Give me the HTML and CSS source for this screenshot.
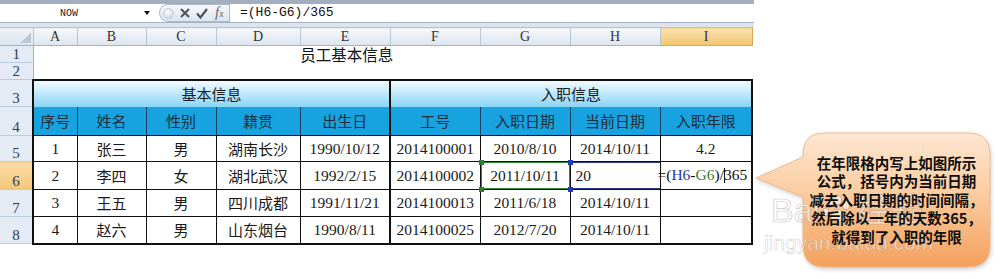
FILE: index.html
```html
<!DOCTYPE html>
<html lang="zh-CN">
<head>
    <meta charset="UTF-8">
    <title>员工基本信息</title>
    <link rel="stylesheet" href="styles.css">
</head>
<body>
    <div class="window">
        <div class="topbar"></div>
        <div class="formula-bar">
            <div class="name-box">
                <span class="name">NOW</span>
                <span class="drop"></span>
            </div>
            <div class="fx-buttons">
                <span class="knob"></span>
                <svg class="btn cancel" width="10" height="10" viewBox="0 0 10 10">
                    <path d="M1 1 L9 9 M9 1 L1 9" stroke="#4d535e" stroke-width="2" fill="none"/>
                </svg>
                <svg class="btn enter" width="12" height="11" viewBox="0 0 12 11">
                    <path d="M1 5.5 L4.5 9.5 L11 1" stroke="#4d535e" stroke-width="2.2" fill="none"/>
                </svg>
                <span class="fx"><i>f</i><small>x</small></span>
            </div>
            <div class="formula-input">=(H6-G6)/365</div>
        </div>
        <div class="bar-gap"></div>

        <table class="sheet">
            <colgroup>
                <col style="width:33px">
                <col style="width:44px">
                <col style="width:69px">
                <col style="width:70px">
                <col style="width:84px">
                <col style="width:90px">
                <col style="width:90px">
                <col style="width:90px">
                <col style="width:90px">
                <col style="width:92px">
            </colgroup>
            <tr class="heads">
                <td class="corner"></td>
                <td>A</td><td>B</td><td>C</td><td>D</td><td>E</td>
                <td>F</td><td>G</td><td>H</td><td class="active">I</td>
            </tr>
            <tr class="r-short">
                <td class="rh">1</td>
                <td colspan="8" class="title">员工基本信息</td>
                <td></td>
            </tr>
            <tr class="r-short">
                <td class="rh">2</td>
                <td colspan="9"></td>
            </tr>
            <tr class="r3">
                <td class="rh">3</td>
                <td colspan="5" class="grp">基本信息</td>
                <td colspan="4" class="grp">入职信息</td>
            </tr>
            <tr class="r4">
                <td class="rh">4</td>
                <td class="hd first">序号</td>
                <td class="hd">姓名</td>
                <td class="hd">性别</td>
                <td class="hd">籍贯</td>
                <td class="hd split">出生日</td>
                <td class="hd">工号</td>
                <td class="hd">入职日期</td>
                <td class="hd">当前日期</td>
                <td class="hd last">入职年限</td>
            </tr>
            <tr class="r5">
                <td class="rh">5</td>
                <td class="c num first">1</td>
                <td class="c">张三</td>
                <td class="c">男</td>
                <td class="c">湖南长沙</td>
                <td class="c num split">1990/10/12</td>
                <td class="c num">2014100001</td>
                <td class="c num">2010/8/10</td>
                <td class="c num">2014/10/11</td>
                <td class="c num last">4.2</td>
            </tr>
            <tr class="r6">
                <td class="rh active">6</td>
                <td class="c num first">2</td>
                <td class="c">李四</td>
                <td class="c">女</td>
                <td class="c">湖北武汉</td>
                <td class="c num split">1992/2/15</td>
                <td class="c num">2014100002</td>
                <td class="c num ref-g">2011/10/11
                    <span class="mk g tl"></span><span class="mk g bl"></span>
                    <span class="mk b tr"></span><span class="mk b br"></span>
                </td>
                <td class="c num ref-h">20</td>
                <td class="c num last editing"><span class="edit">=(<span class="h-ref">H6</span>-<span class="g-ref">G6</span>)/<span class="caret"></span>365</span></td>
            </tr>
            <tr class="r7">
                <td class="rh">7</td>
                <td class="c num first">3</td>
                <td class="c">王五</td>
                <td class="c">男</td>
                <td class="c">四川成都</td>
                <td class="c num split">1991/11/21</td>
                <td class="c num">2014100013</td>
                <td class="c num">2011/6/18</td>
                <td class="c num">2014/10/11</td>
                <td class="c num last"></td>
            </tr>
            <tr class="r8">
                <td class="rh">8</td>
                <td class="c num first">4</td>
                <td class="c">赵六</td>
                <td class="c">男</td>
                <td class="c">山东烟台</td>
                <td class="c num split">1990/8/11</td>
                <td class="c num">2014100025</td>
                <td class="c num">2012/7/20</td>
                <td class="c num">2014/10/11</td>
                <td class="c num last"></td>
            </tr>
        </table>
    </div>

    <!-- note bubble pointing at I6 -->
    <div class="callout">
        <svg class="bubble" width="240" height="142" viewBox="0 0 240 142">
            <defs>
                <linearGradient id="peach" x1="0" y1="0" x2="0" y2="1">
                    <stop offset="0" stop-color="#fde7d3"/>
                    <stop offset="0.45" stop-color="#fbcc9f"/>
                    <stop offset="1" stop-color="#f4a05c"/>
                </linearGradient>
            </defs>
            <path d="M1 48 L48 27 L48 25 Q48 3 70 3 L213 3 Q235 3 235 25 L235 115 Q235 137 213 137 L70 137 Q48 137 48 115 L48 67 Z"
                  fill="url(#peach)" stroke="#eeb98a" stroke-width="1"/>
        </svg>
        <div class="wm-big">
            Bai<svg class="paw" width="30" height="30" viewBox="0 0 30 30">
                <g fill="rgba(255,255,255,0.55)" stroke="rgba(120,120,120,0.45)" stroke-width="1">
                    <ellipse cx="8" cy="8" rx="3.5" ry="4.5"/>
                    <ellipse cx="16" cy="5" rx="3.5" ry="4.5"/>
                    <ellipse cx="24" cy="10" rx="3.5" ry="4.5"/>
                    <ellipse cx="4" cy="17" rx="3" ry="4"/>
                    <path d="M9 25 Q9 15 15 14 Q22 15 22 25 Q15 29 9 25 Z"/>
                </g>
            </svg>经验
        </div>
        <div class="wm-url">jingyan.baidu.com</div>
        <div class="note">
            在年限格内写上如图所示<br>
            公式，括号内为当前日期<br>
            减去入职日期的时间间隔，<br>
            然后除以一年的天数365，<br>
            就得到了入职的年限
        </div>
    </div>
</body>
</html>
```

FILE: styles.css
```css
body {
    margin: 0;
    background: #fff;
    font-family: "Noto Sans CJK SC", sans-serif;
    overflow: hidden;
}
.window {
    width: 754px;
}
.topbar {
    height: 4px;
    background: #a3afbf;
}

/* formula bar */
.formula-bar {
    display: flex;
    height: 18px;
    border-bottom: 1px solid #a3b2c4;
    background: #fff;
}
.name-box {
    width: 159px;
    display: flex;
    align-items: center;
}
.name-box .name {
    margin-left: 60px;
    font-family: "Liberation Mono", monospace;
    font-size: 10px;
    color: #222;
}
.name-box .drop {
    margin-left: 66px;
    width: 0;
    height: 0;
    border-left: 3px solid transparent;
    border-right: 3px solid transparent;
    border-top: 4px solid #111;
}
.fx-buttons {
    width: 70px;
    display: flex;
    align-items: center;
    border: 1px solid #aab8c9;
    border-right: none;
    border-radius: 9px 0 0 9px;
    background: linear-gradient(#f6f8fb, #dce4ee);
    box-sizing: border-box;
    height: 18px;
}
.knob {
    width: 9px;
    height: 9px;
    margin-left: 3px;
    border-radius: 50%;
    background: radial-gradient(circle at 40% 35%, #fff, #c4ccd6);
    border: 1px solid #c3ccd7;
}
.cancel {
    margin-left: 6px;
}
.enter {
    margin-left: 6px;
}
.fx {
    margin-left: 7px;
    font-family: "Liberation Serif", serif;
    font-size: 15px;
    line-height: 16px;
    color: #5d6571;
}
.fx small {
    font-size: 10px;
    font-style: italic;
}
.formula-input {
    flex: 1;
    border-left: 1px solid #aab8c9;
    padding-left: 10px;
    font-family: "Liberation Mono", monospace;
    font-size: 13px;
    line-height: 18px;
    color: #111;
}
.bar-gap {
    height: 4px;
    background: #dde4ed;
}

/* sheet grid */
.sheet {
    border-collapse: collapse;
    table-layout: fixed;
    width: 752px;
}
.sheet td {
    padding: 0;
    text-align: center;
    vertical-align: middle;
    white-space: nowrap;
    font-size: 15px;
    line-height: 14px;
    color: #1a1a1a;
}
.heads td {
    height: 17px;
    background: linear-gradient(#f6f8fb, #dde5ee);
    border-top: 1px solid #b4c2d2;
    border-right: 1px solid #b5c6d8;
    border-bottom: 1px solid #9fb3c9;
    font-family: "Liberation Serif", serif;
    font-size: 14px;
    color: #333;
}
.heads td.active {
    background: linear-gradient(#fbe3b4, #f2c46b);
    border-right-color: #d9a850;
}
.heads td.corner {
    background:
        linear-gradient(135deg, transparent 50%, #bcc8d6 50%) right 2px bottom 2px / 11px 11px no-repeat,
        linear-gradient(#eef2f7, #dce4ee);
}
.sheet td.rh {
    background: #e4ebf5;
    border-right: 1px solid #9fb3c9;
    border-bottom: 1px solid #bccbdc;
    font-family: "Liberation Serif", serif;
    font-size: 15px;
    color: #2a3c58;
    vertical-align: bottom;
    padding-bottom: 1px;
}
.sheet td.rh.active {
    background: linear-gradient(#fbdca6, #f3c778);
}
.r-short td {
    height: 15px;
}
.sheet td.title {
    font-size: 15.5px;
    color: #111;
}
.r3 td { height: 25px; }
.r4 td { height: 27px; }
.r5 td { height: 24px; }
.r6 td { height: 26px; }
.r7 td { height: 25px; }
.r8 td { height: 25px; }

.sheet td.grp {
    background: linear-gradient(#f2fbfe, #8ad5f6);
    border-top: 2px solid #111;
    border-left: 2px solid #111;
    border-right: 2px solid #111;
    color: #1c1c1c;
}
.sheet td.hd {
    background: #17a3e0;
    border-left: 1px solid #173f62;
    border-right: 1px solid #173f62;
    border-bottom: 1px solid #111;
    color: #1f2d3c;
}
.sheet td.c {
    border: 1px solid #111;
    background: #fff;
}
.sheet td.num {
    font-family: "Liberation Serif", serif;
    font-size: 15.5px;
}
.sheet td.first { border-left: 2px solid #111; }
.sheet td.last { border-right: 2px solid #111; }
.sheet td.split { border-right: 2px solid #111; }
.r8 td.c { border-bottom: 2px solid #111; }

/* formula reference highlights */
.sheet td.ref-g {
    position: relative;
    box-shadow: inset 1px 1px 0 #2f8a36, inset -1px -1px 0 #2f8a36;
}
.sheet td.ref-h {
    text-align: left;
    padding-left: 5px;
    box-shadow: inset 0 1px 0 #2b3a8f, inset 0 -1px 0 #2b3a8f;
}
.mk {
    position: absolute;
    width: 5px;
    height: 5px;
}
.mk.g { background: #2c7f2f; }
.mk.b { background: #1f3bbd; }
.mk.tl { left: -2px; top: -2px; }
.mk.bl { left: -2px; bottom: -3px; }
.mk.tr { right: -3px; top: -2px; }
.mk.br { right: -3px; bottom: -3px; }

.sheet td.editing {
    text-align: left;
    border-left-color: transparent;
}
.edit {
    display: inline-block;
    margin-left: -3px;
    color: #111;
}
.h-ref { color: #28399a; }
.g-ref { color: #3c7d34; }
.caret {
    display: inline-block;
    width: 1px;
    height: 15px;
    background: #111;
    vertical-align: -3px;
    margin-right: -1px;
}

/* callout note */
.callout {
    position: absolute;
    left: 755px;
    top: 130px;
    width: 240px;
    height: 142px;
}
.bubble {
    position: absolute;
    left: 0;
    top: 0;
    filter: drop-shadow(1px 2px 2px rgba(0,0,0,0.18));
}
.note {
    position: absolute;
    left: 48px;
    top: 3px;
    width: 187px;
    height: 134px;
    display: flex;
    align-items: center;
    justify-content: center;
    text-align: center;
    font-weight: bold;
    font-size: 14.5px;
    line-height: 18.5px;
    color: #0d0d0d;
}
.wm-big {
    position: absolute;
    left: 16px;
    top: 60px;
    display: flex;
    align-items: center;
    font-family: "Liberation Sans", sans-serif;
    font-size: 34px;
    line-height: 40px;
    color: rgba(255,255,255,0.5);
    -webkit-text-stroke: 0.7px rgba(120,120,120,0.45);
    white-space: nowrap;
}
.wm-big .paw {
    margin: 0 4px 0 2px;
}
.wm-url {
    position: absolute;
    left: 9px;
    top: 101px;
    font-family: "Liberation Sans", sans-serif;
    font-size: 21px;
    color: rgba(255,255,255,0.5);
    -webkit-text-stroke: 0.5px rgba(120,120,120,0.4);
}
```
